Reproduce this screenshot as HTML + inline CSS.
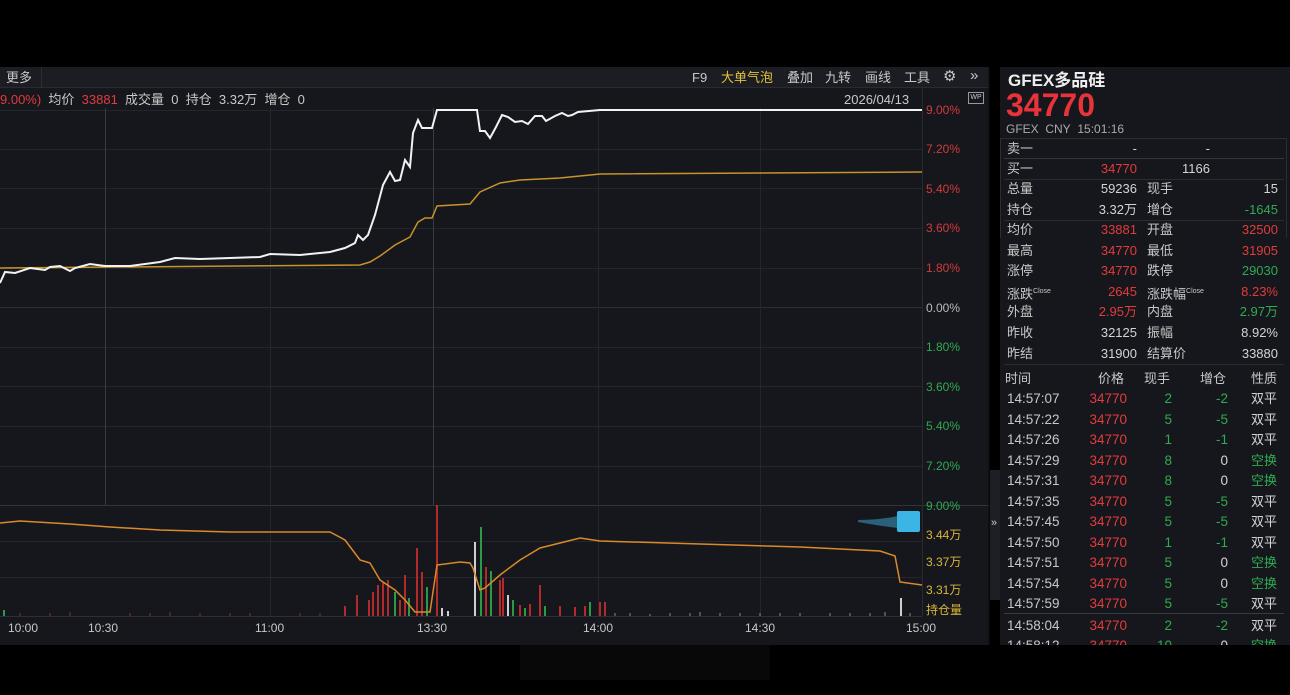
<!DOCTYPE html>
<html><head><meta charset="utf-8"><style>
*{margin:0;padding:0;box-sizing:border-box}
body{width:1290px;height:695px;background:#000;position:relative;overflow:hidden;font-family:"Liberation Sans","Noto Sans CJK SC",sans-serif;color:#c8c8c8;font-size:13px}
.a{position:absolute;white-space:nowrap;line-height:16px}
.r{color:#e23b3b}.g{color:#2eaa50}.w{color:#d4d4d4}
.rt{text-align:right}
</style></head><body>
<div class="a" style="left:0;top:67px;width:990px;height:578px;background:#16171c"></div>
<div class="a" style="left:0;top:67px;width:990px;height:21px;background:#1c1d22;border-bottom:1px solid #2a2b30"></div>
<div class="a" style="left:0;top:67px;width:42px;height:21px;border-right:1px solid #2c2d32"></div>
<div class="a" style="left:6px;top:70px">更多</div>
<div class="a" style="left:692px;top:70px">F9</div>
<div class="a" style="left:721px;top:70px;color:#e0c23a">大单气泡</div>
<div class="a" style="left:787px;top:70px">叠加</div>
<div class="a" style="left:825px;top:70px">九转</div>
<div class="a" style="left:865px;top:70px">画线</div>
<div class="a" style="left:904px;top:70px">工具</div>
<div class="a" style="left:943px;top:69px;font-size:15px">⚙</div>
<div class="a" style="left:970px;top:68px;font-size:15px">»</div>
<div class="a" style="left:0;top:92px"><span class="r">9.00%)</span>&nbsp; 均价&nbsp; <span class="r">33881</span>&nbsp; 成交量&nbsp; 0&nbsp; 持仓&nbsp; 3.32万&nbsp; 增仓&nbsp; 0</div>
<div class="a" style="left:844px;top:92px">2026/04/13</div>
<div class="a" style="left:968px;top:92px;width:16px;height:12px;border:1px solid #999;font-size:7px;text-align:center;line-height:10px">WP</div>
<svg class="a" style="left:0;top:0" width="990" height="645">
<g stroke="#25262c" stroke-width="1">
<line x1="0" y1="110.5" x2="922" y2="110.5"/><line x1="0" y1="149.5" x2="922" y2="149.5"/><line x1="0" y1="188.5" x2="922" y2="188.5"/><line x1="0" y1="228.5" x2="922" y2="228.5"/><line x1="0" y1="268.5" x2="922" y2="268.5"/><line x1="0" y1="307.5" x2="922" y2="307.5" stroke="#2e2f35"/><line x1="0" y1="347.5" x2="922" y2="347.5"/><line x1="0" y1="386.5" x2="922" y2="386.5"/><line x1="0" y1="426.5" x2="922" y2="426.5"/><line x1="0" y1="466.5" x2="922" y2="466.5"/>
<line x1="0" y1="505.5" x2="990" y2="505.5" stroke="#33343a"/>
<line x1="0" y1="541.5" x2="922" y2="541.5"/><line x1="0" y1="577.5" x2="922" y2="577.5"/>
<line x1="0" y1="616.5" x2="922" y2="616.5" stroke="#2e2f35"/>
<line x1="270.5" y1="108" x2="270.5" y2="616"/><line x1="598.5" y1="108" x2="598.5" y2="616"/><line x1="760.5" y1="108" x2="760.5" y2="616"/>
<line x1="105.5" y1="108" x2="105.5" y2="505" stroke="#3a3b42"/><line x1="433.5" y1="108" x2="433.5" y2="505" stroke="#3a3b42"/>
<line x1="922.5" y1="88" x2="922.5" y2="616" stroke="#2a2b30"/>
<line x1="989.5" y1="67" x2="989.5" y2="645" stroke="#0a0a0c" stroke-width="2"/>
</g>
<polyline fill="none" stroke="#c8932a" stroke-width="1.5" points="0,268 360,265 370,262 380,256 395,245 410,237 418,222 425,218 432,218 437,206 470,204 480,192 500,183 520,180 560,178 600,174 922,172"/>
<polyline fill="none" stroke="#f2f2f2" stroke-width="2" points="0,283 5,272 15,273 30,268 45,270 50,267 60,266 70,271 75,268 90,264 105,266 130,266 160,262 175,258 200,259 230,258 260,257 270,254 300,255 330,252 345,248 355,243 358,235 363,240 368,235 375,215 383,185 390,172 395,181 400,180 405,160 410,167 413,133 418,120 422,128 432,128 437,110 477,110 480,131 485,131 490,138 496,127 502,115 508,117 515,122 522,121 528,124 535,116 542,116 546,121 555,116 562,113 568,116 572,115 578,112 600,110 922,110"/>
<g stroke-width="2">
<g stroke="#b32a2a"><line x1="357" y1="616" x2="357" y2="595"/><line x1="369" y1="616" x2="369" y2="600"/><line x1="373" y1="616" x2="373" y2="592"/><line x1="378" y1="616" x2="378" y2="585"/><line x1="383" y1="616" x2="383" y2="583"/><line x1="388" y1="616" x2="388" y2="580"/><line x1="400" y1="616" x2="400" y2="600"/><line x1="405" y1="616" x2="405" y2="575"/><line x1="417" y1="616" x2="417" y2="548"/><line x1="422" y1="616" x2="422" y2="572"/><line x1="437" y1="616" x2="437" y2="505"/><line x1="486" y1="616" x2="486" y2="567"/><line x1="500" y1="616" x2="500" y2="580"/><line x1="503" y1="616" x2="503" y2="578"/><line x1="520" y1="616" x2="520" y2="605"/><line x1="540" y1="616" x2="540" y2="585"/><line x1="560" y1="616" x2="560" y2="606"/><line x1="575" y1="616" x2="575" y2="607"/><line x1="600" y1="616" x2="600" y2="602"/><line x1="605" y1="616" x2="605" y2="602"/><line x1="345" y1="616" x2="345" y2="606"/><line x1="530" y1="616" x2="530" y2="604"/><line x1="585" y1="616" x2="585" y2="606"/></g>
<g stroke="#2a9a47"><line x1="395" y1="616" x2="395" y2="592"/><line x1="409" y1="616" x2="409" y2="598"/><line x1="427" y1="616" x2="427" y2="587"/><line x1="481" y1="616" x2="481" y2="527"/><line x1="491" y1="616" x2="491" y2="571"/><line x1="513" y1="616" x2="513" y2="600"/><line x1="525" y1="616" x2="525" y2="608"/><line x1="545" y1="616" x2="545" y2="606"/><line x1="590" y1="616" x2="590" y2="602"/><line x1="4" y1="616" x2="4" y2="610"/></g>
<g stroke="#d0d0d0"><line x1="442" y1="616" x2="442" y2="608"/><line x1="448" y1="616" x2="448" y2="611"/><line x1="475" y1="616" x2="475" y2="542"/><line x1="508" y1="616" x2="508" y2="595"/><line x1="901" y1="616" x2="901" y2="598"/></g>
</g>
<g stroke="#8a3030" stroke-width="1"><path d="M20 616v-3M50 616v-3M70 616v-4M130 616v-3M150 616v-3M170 616v-4M200 616v-3M230 616v-3M250 616v-3M300 616v-3M320 616v-3"/></g>
<g stroke="#888" stroke-width="1"><path d="M615 616v-3M630 616v-3M650 616v-2M670 616v-3M690 616v-3M700 616v-4M720 616v-3M740 616v-3M760 616v-3M780 616v-3M800 616v-3M830 616v-3M850 616v-3M870 616v-3M885 616v-4M910 616v-3"/></g>
<polyline fill="none" stroke="#d9892a" stroke-width="1.5" points="0,523 20,521 70,524 110,527 160,530 230,532 330,532 345,540 360,560 370,563 380,580 395,590 405,600 415,612 430,612 437,565 460,562 470,563 473,568 480,590 485,588 500,575 520,560 540,548 560,543 580,538 600,541 700,544 800,547 880,551 895,556 900,582 922,585"/>
<path d="M858 520 Q880 520 898 516 L898 528 Q880 526 858 522Z" fill="#3fa9d8" opacity="0.5"/>
<rect x="897" y="511" width="23" height="21" rx="2" fill="#3bb4e6"/>
</svg>
<div class="a" style="left:926px;top:102px;font-size:12px;color:#d03b3b">9.00%</div>
<div class="a" style="left:926px;top:141px;font-size:12px;color:#d03b3b">7.20%</div>
<div class="a" style="left:926px;top:181px;font-size:12px;color:#d03b3b">5.40%</div>
<div class="a" style="left:926px;top:220px;font-size:12px;color:#d03b3b">3.60%</div>
<div class="a" style="left:926px;top:260px;font-size:12px;color:#d03b3b">1.80%</div>
<div class="a" style="left:926px;top:300px;font-size:12px;color:#bbb">0.00%</div>
<div class="a" style="left:926px;top:339px;font-size:12px;color:#2eaa50">1.80%</div>
<div class="a" style="left:926px;top:379px;font-size:12px;color:#2eaa50">3.60%</div>
<div class="a" style="left:926px;top:418px;font-size:12px;color:#2eaa50">5.40%</div>
<div class="a" style="left:926px;top:458px;font-size:12px;color:#2eaa50">7.20%</div>
<div class="a" style="left:926px;top:498px;font-size:12px;color:#2eaa50">9.00%</div>
<div class="a" style="left:926px;top:527px;font-size:12px;color:#d8b73a">3.44万</div>
<div class="a" style="left:926px;top:554px;font-size:12px;color:#d8b73a">3.37万</div>
<div class="a" style="left:926px;top:582px;font-size:12px;color:#d8b73a">3.31万</div>
<div class="a" style="left:926px;top:602px;font-size:12px;color:#d8b73a">持仓量</div>
<div class="a" style="left:8px;top:620px;font-size:12px">10:00</div>
<div class="a" style="left:88px;top:620px;font-size:12px">10:30</div>
<div class="a" style="left:255px;top:620px;font-size:12px">11:00</div>
<div class="a" style="left:417px;top:620px;font-size:12px">13:30</div>
<div class="a" style="left:583px;top:620px;font-size:12px">14:00</div>
<div class="a" style="left:745px;top:620px;font-size:12px">14:30</div>
<div class="a" style="left:906px;top:620px;font-size:12px">15:00</div>
<div class="a" style="left:990px;top:470px;width:10px;height:130px;background:#1e1f24"></div>
<div class="a" style="left:991px;top:515px;font-size:11px">»</div>

<div class="a" style="left:1000px;top:67px;width:290px;height:578px;background:#16171c"></div>
<div class="a" style="left:1008px;top:71px;font-size:17px;line-height:20px;font-weight:bold;color:#eee">GFEX多品硅</div>
<div class="a" style="left:1006px;top:90px;font-size:32px;line-height:30px;font-weight:bold;color:#e8333a">34770</div>
<div class="a" style="left:1006px;top:121px;font-size:12px;color:#aaa">GFEX&nbsp; CNY&nbsp; 15:01:16</div>
<div class="a" style="left:1000px;top:138px;width:287px;height:100px;border:1px solid #2c2d32;border-bottom:none"></div>
<div class="a" style="left:1004px;top:158px;width:280px;border-top:1px solid #34353a"></div>
<div class="a" style="left:1004px;top:179px;width:280px;border-top:1px solid #2c2d32"></div>
<div class="a" style="left:1004px;top:220px;width:280px;border-top:1px solid #2c2d32"></div>
<div class="a" style="left:1004px;top:364px;width:280px;border-top:1px solid #2c2d32"></div>
<div class="a" style="left:1004px;top:613px;width:280px;border-top:1px solid #3a3b40"></div>
<div id="q"></div>
<div class="a" style="left:0;top:645px;width:1290px;height:50px;background:#000"></div>
<div class="a" style="left:520px;top:645px;width:250px;height:35px;background:#080808"></div>
<script>
const rows=[
[141,'卖一','-','w','-','w',''],
[161,'买一','34770','r','1166','w','mid'],
[181,'总量','59236','w','现手','15','w'],
[202,'持仓','3.32万','w','增仓','-1645','g'],
[222,'均价','33881','r','开盘','32500','r'],
[243,'最高','34770','r','最低','31905','r'],
[263,'涨停','34770','r','跌停','29030','g'],
[284,'涨跌<sup style="font-size:7px">Close</sup>','2645','r','涨跌幅<sup style="font-size:7px">Close</sup>','8.23%','r'],
[304,'外盘','2.95万','r','内盘','2.97万','g'],
[325,'昨收','32125','w','振幅','8.92%','w'],
[346,'昨结','31900','w','结算价','33880','w']];
let h='';
rows.forEach((r,i)=>{
 if(i<2){h+=`<div class="a" style="left:1007px;top:${r[0]}px">${r[1]}</div><div class="a rt ${r[3]}" style="left:1077px;width:60px;top:${r[0]}px">${r[2]}</div><div class="a rt ${r[5]}" style="left:1150px;width:60px;top:${r[0]}px">${r[4]}</div>`;}
 else{h+=`<div class="a" style="left:1007px;top:${r[0]}px">${r[1]}</div><div class="a rt ${r[3]}" style="left:1077px;width:60px;top:${r[0]}px">${r[2]}</div><div class="a" style="left:1147px;top:${r[0]}px">${r[4]}</div><div class="a rt ${r[6]}" style="left:1208px;width:70px;top:${r[0]}px">${r[5]}</div>`;}
});
h+=`<div class="a" style="left:1005px;top:371px">时间</div><div class="a" style="left:1098px;top:371px">价格</div><div class="a" style="left:1144px;top:371px">现手</div><div class="a" style="left:1200px;top:371px">增仓</div><div class="a" style="left:1251px;top:371px">性质</div>`;
const t=[['14:57:07',2,-2,'双平'],['14:57:22',5,-5,'双平'],['14:57:26',1,-1,'双平'],['14:57:29',8,0,'空换'],['14:57:31',8,0,'空换'],['14:57:35',5,-5,'双平'],['14:57:45',5,-5,'双平'],['14:57:50',1,-1,'双平'],['14:57:51',5,0,'空换'],['14:57:54',5,0,'空换'],['14:57:59',5,-5,'双平'],['14:58:04',2,-2,'双平'],['14:58:12',10,0,'空换']];
t.forEach((r,i)=>{const y=391+i*20.5+(i>10?1:0);
h+=`<div class="a" style="left:1007px;top:${y}px;font-size:13.5px">${r[0]}</div><div class="a r rt" style="left:1070px;width:57px;top:${y}px;font-size:13.5px">34770</div><div class="a g rt" style="left:1130px;width:42px;top:${y}px;font-size:13.5px">${r[1]}</div><div class="a rt ${r[2]?'g':'w'}" style="left:1190px;width:38px;top:${y}px;font-size:13.5px">${r[2]}</div><div class="a ${r[3]=='空换'?'g':'w'}" style="left:1251px;top:${y}px">${r[3]}</div>`;});
document.getElementById('q').innerHTML=h;
</script>
</body></html>
